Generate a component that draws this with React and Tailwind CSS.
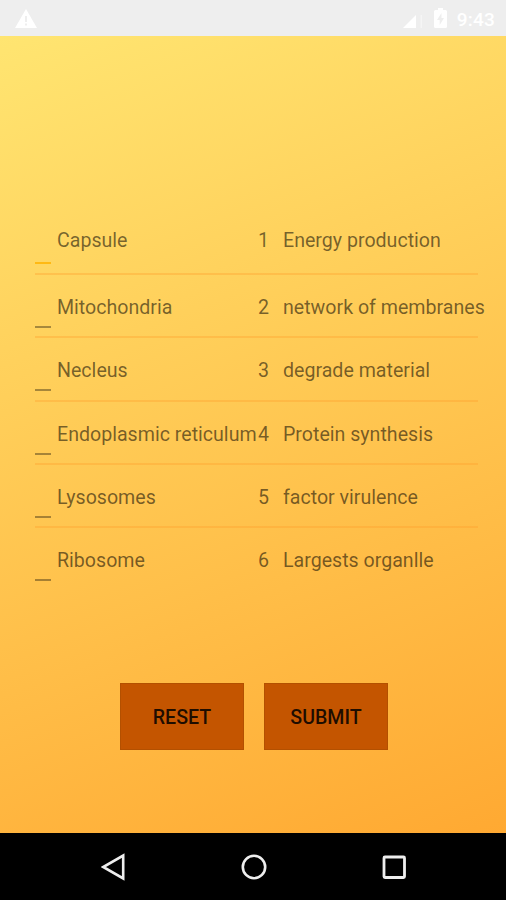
import { useState } from 'react';

const rows = [
  { part: 'Capsule', role: 'Energy production' },
  { part: 'Mitochondria', role: 'network of membranes' },
  { part: 'Necleus', role: 'degrade material' },
  { part: 'Endoplasmic reticulum', role: 'Protein synthesis' },
  { part: 'Lysosomes', role: 'factor virulence' },
  { part: 'Ribosome', role: 'Largests organlle' },
];

const StatusBar = () => (
  <header className="flex h-9 items-center bg-[#eeeeee] pl-[15px] pr-[11px] text-white">
    <svg className="h-[19px] w-[22px]" viewBox="0 0 22 19" fill="currentColor">
      <path fillRule="evenodd" d="M11 0 22 19H0ZM10 7v6h2V7ZM10 14.5v2h2v-2Z" />
    </svg>
    <div className="ml-auto flex items-center">
      <svg className="mt-[7px] h-[13px] w-[22px]" viewBox="0 0 22 13" fill="currentColor">
        <path d="M0 13 13 0v13Z" />
        <path d="M17.5 0H19v13h-1.500Z" opacity="0.4" />
      </svg>
      <svg className="ml-[9px] h-[20px] w-[13px]" viewBox="0 0 13 20" fill="currentColor">
        <path fillRule="evenodd" d="M4 0h5v2h2.500a1.500 1.500 0 0 1 1.500 1.500v15a1.500 1.500 0 0 1-1.500 1.500h-10A1.500 1.500 0 0 1 0 18.500v-15A1.500 1.500 0 0 1 1.500 2H4ZM7.500 5 3 12h2.700v5L10 10H7.500Z" />
      </svg>
      <span className="ml-[10px] mt-[2px] text-[19px] font-medium leading-none tracking-[0.2px]">9:43</span>
    </div>
  </header>
);

const NavBar = () => (
  <nav className="flex h-[67px] items-center justify-between bg-black pl-[101px] pr-[98px] text-[#eeeeee]">
    <svg className="h-7 w-7" viewBox="0 0 28 28" fill="none" stroke="currentColor" strokeWidth="2.6">
      <path d="M22.200 2.600v22.800L2.200 14Z" />
    </svg>
    <svg className="h-7 w-7" viewBox="0 0 28 28" fill="none" stroke="currentColor" strokeWidth="2.6">
      <circle cx="13" cy="14" r="11.200" />
    </svg>
    <svg className="h-7 w-7" viewBox="0 0 28 28" fill="none" stroke="currentColor" strokeWidth="2.800">
      <rect x="4" y="4" width="20.500" height="20.500" rx="1" />
    </svg>
  </nav>
);

const App = () => {
  const [answers, setAnswers] = useState(rows.map(() => ''));

  const handleChange = (index, value) => {
    setAnswers(answers.map((a, i) => (i === index ? value : a)));
  };

  const handleReset = () => setAnswers(rows.map(() => ''));

  return (
    <div className="flex h-[900px] w-[506px] flex-col overflow-hidden font-['Roboto',sans-serif]">
      <StatusBar />
      <main className="flex flex-1 flex-col bg-[linear-gradient(159deg,#ffe571,#ffa932)] pt-[175px]">
        <div className="pl-[35px] text-[19.6px] text-black/55">
          {rows.map((row, i) => (
            <div
              key={row.part}
              className={`flex w-[443px] ${i === 0 ? 'h-[64px]' : 'h-[63.3px]'} ${i < rows.length - 1 ? 'border-b-2 border-[#ff9e2b]/35' : ''}`}
            >
              <input
                value={answers[i]}
                onChange={(e) => handleChange(i, e.target.value)}
                maxLength={1}
                className={`h-[53px] w-4 border-b-2 outline-none ${i === 0 ? 'border-[#ffb914]' : 'border-black/35'}`}
              />
              <div className={`flex whitespace-nowrap pl-[6px] leading-6 ${i === 0 ? 'pt-[18px]' : 'pt-[21px]'}`}>
                <span className="w-[201px]">{row.part}</span>
                <span className="w-[25px]">{i + 1}</span>
                <span>{row.role}</span>
              </div>
            </div>
          ))}
        </div>
        <div className="mt-[91.3px] flex gap-5 pl-[120px]">
          <button
            onClick={handleReset}
            className="h-[67px] w-[124px] border border-[#b35000] bg-[#c45500] pt-[3px] text-[19.6px] font-medium text-black/85"
          >
            RESET
          </button>
          <button className="h-[67px] w-[124px] border border-[#b35000] bg-[#c45500] pt-[3px] text-[19.6px] font-medium text-black/85">
            SUBMIT
          </button>
        </div>
      </main>
      <NavBar />
    </div>
  );
};

export default App;
